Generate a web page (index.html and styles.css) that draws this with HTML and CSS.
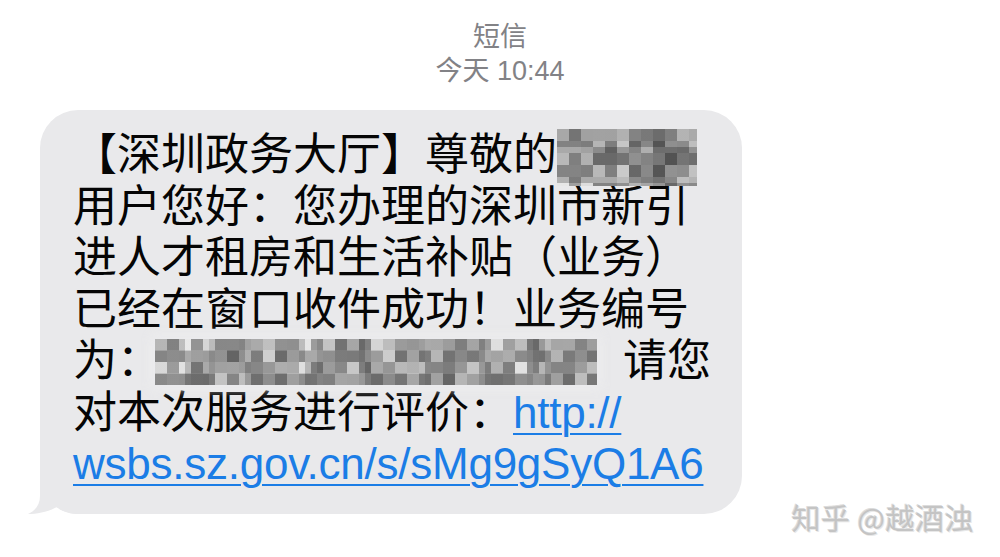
FILE: index.html
```html
<!DOCTYPE html>
<html lang="zh-CN">
<head>
<meta charset="utf-8">
<title>短信</title>
<link rel="stylesheet" href="styles.css">
</head>
<body>
<div class="screen">
  <header class="meta">
    <div class="meta-title">短信</div>
    <div class="meta-time">今天 10:44</div>
  </header>
  <div class="thread">
    <div class="bubble">
      <svg class="tail" width="50" height="40" viewBox="0 0 50 40" aria-hidden="true">
        <path d="M12 0 L12 22 C12 31 7 37 0 40 C9 40 20 38 29 33 C35 38 42 40 50 40 L50 0 Z" fill="#e9e9eb"/>
      </svg>
      <p class="msg">【深圳政务大厅】尊敬的<span class="mosaic mosaic-name"></span><br>用户您好：您办理的深圳市新引<br>进人才租房和生活补贴（业务）<br>已经在窗口收件成功！业务编号<br>为：<span class="mosaic mosaic-code"></span>请您<br>对本次服务进行评价：<a class="link" href="#">http://<br>wsbs.sz.gov.cn/s/sMg9gSyQ1A6</a></p>
    </div>
  </div>
  <div class="watermark">知乎 @越酒浊</div>
</div>
</body>
</html>
```
FILE: styles.css
```css
html, body {
  margin: 0;
  padding: 0;
  background: #ffffff;
}

.screen {
  position: relative;
  width: 1000px;
  height: 557px;
  overflow: hidden;
  font-family: "Liberation Sans", "Noto Sans CJK SC", sans-serif;
}

.meta {
  padding-top: 20px;
  text-align: center;
  color: #828286;
  font-size: 27px;
  line-height: 34px;
}

.thread {
  padding: 22px 0 0 40px;
}

.bubble {
  position: relative;
  width: 702px;
  box-sizing: border-box;
  background: #e9e9eb;
  border-radius: 38px;
  padding: 19px 0 24px 33px;
}

.tail {
  position: absolute;
  left: -12px;
  bottom: 0;
  display: block;
}

.msg {
  position: relative;
  margin: 0;
  font-size: 44px;
  line-height: 51.5px;
  color: #050505;
  white-space: nowrap;
}

.link {
  color: #1b7de6;
  letter-spacing: -0.25px;
  text-decoration: underline;
  text-decoration-thickness: 2px;
  text-underline-offset: 5px;
}

.mosaic {
  display: inline-block;
  vertical-align: middle;
  background-color: #ffffff;
  background-blend-mode: multiply;
  filter: blur(0.7px);
}

.mosaic-name {
  width: 140px;
  height: 57px;
  margin: -9px 0 -7px 0;
  background-image:
    repeating-conic-gradient(#d4d4d4 0 25%, #ffffff 0 50%),
    repeating-conic-gradient(#ffffff 0 25%, #c4c4c4 0 50%),
    linear-gradient(90deg, #f2f2f2 0 12px, #c9c9c9 12px 24px, #e8e8e8 24px 36px, #d8d8d8 36px 48px, #b3b3b3 48px 60px, #ececec 60px 72px, #bdbdbd 72px 84px, #d0d0d0 84px 96px, #9c9c9c 96px 108px, #aaaaaa 108px 120px, #c7c7c7 120px 132px, #e2e2e2 132px 140px),
    linear-gradient(180deg, #e6e6e6 0 12px, #d6d6d6 12px 24px, #c2c2c2 24px 36px, #dadada 36px 48px, #f3f3f3 48px 57px);
  background-size: 24px 24px, 72px 36px, 100% 100%, 100% 100%;
}

.mosaic-code {
  width: 442px;
  height: 46px;
  margin: 0 26px 0 -6px;
  vertical-align: -9px;
  background-image:
    repeating-conic-gradient(#d2d2d2 0 25%, #ffffff 0 50%),
    repeating-conic-gradient(#ffffff 0 25%, #d0d0d0 0 50%),
    repeating-conic-gradient(#e0e0e0 0 25%, #ffffff 0 50%),
    repeating-linear-gradient(90deg, #e6e6e6 0 12px, #c8c8c8 12px 24px, #f0f0f0 24px 36px, #b8b8b8 36px 48px, #dcdcdc 48px 60px, #ededed 60px 72px, #c4c4c4 72px 84px),
    repeating-linear-gradient(180deg, #f7f7f7 0 11px, #dcdcdc 11px 23px, #f0f0f0 23px 34px, #d2d2d2 34px 46px);
  background-size: 24px 23px, 60px 46px, 108px 69px, 100% 100%, 100% 100%;
  box-shadow: 0 0 10px 4px rgba(236, 236, 238, 0.9);
}

.watermark {
  position: absolute;
  right: 26px;
  top: 498px;
  font-family: "Noto Sans CJK SC", sans-serif;
  font-size: 29px;
  line-height: 38px;
  color: #c4c4c4;
  text-shadow: 1px 1px 0 #e8e8e8, -1px -1px 0 #dcdcdc;
  letter-spacing: 0.5px;
}
```
